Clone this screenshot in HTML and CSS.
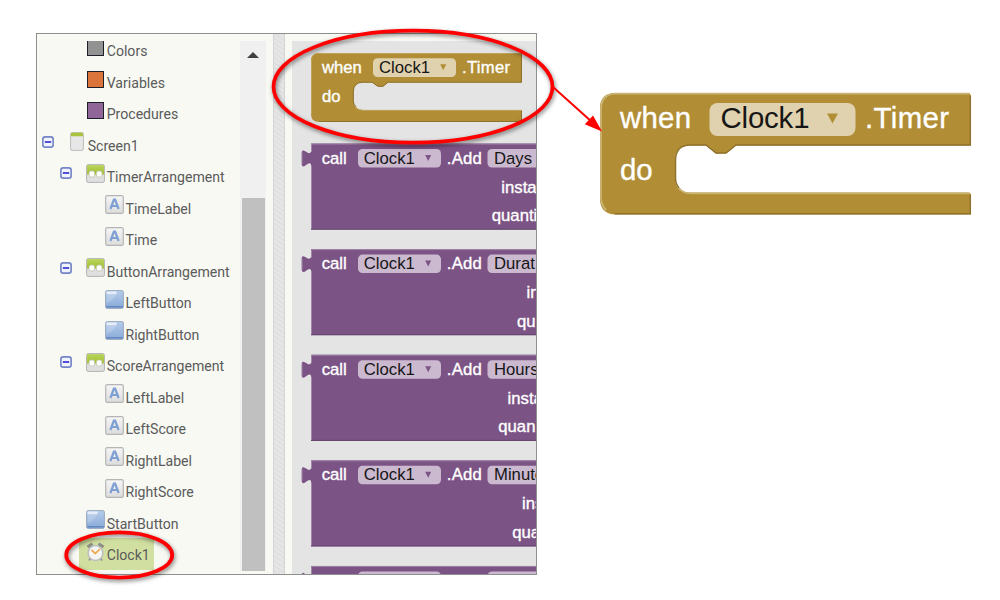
FILE: index.html
```html
<!DOCTYPE html>
<html lang="en">
<head>
<meta charset="utf-8">
<title>Clock1 Timer block</title>
<link rel="stylesheet" href="styles.css">
</head>
<body>
<svg class="defs" width="0" height="0" aria-hidden="true">
  <defs>
    <linearGradient id="g-green" x1="0" y1="0" x2="0" y2="1"><stop offset="0" stop-color="#b9d55c"/><stop offset="1" stop-color="#9fbe2d"/></linearGradient>
    <linearGradient id="g-grey" x1="0" y1="0" x2="0" y2="1"><stop offset="0" stop-color="#f6f6f6"/><stop offset="1" stop-color="#dcdcdc"/></linearGradient>
    <linearGradient id="g-blue" x1="0" y1="0" x2="0" y2="1"><stop offset="0" stop-color="#b5ccea"/><stop offset="1" stop-color="#88aad8"/></linearGradient>
    <symbol id="i-minus" viewBox="0 0 11 11"><rect x=".8" y=".8" width="9.4" height="9.4" rx="2.2" fill="#f1f3fc" stroke="#7484c6" stroke-width="1.5"/><path d="M2.6 5.5h5.8" stroke="#2d2dcf" stroke-width="1.5"/></symbol>
    <symbol id="i-screen" viewBox="0 0 14 19"><rect x=".6" y=".6" width="12.8" height="17.8" rx="1.6" fill="#e7e7e7" stroke="#bcbcbc"/><path d="M1 4.2V1.8Q1 .8 2 .8h10q1 0 1 1v2.4z" fill="#a9c43c"/></symbol>
    <symbol id="i-arr" viewBox="0 0 19 19"><rect x=".6" y=".6" width="17.8" height="17.8" rx="1.6" fill="#dfdfdf" stroke="#b3b3b3"/><path d="M1.1 10.500V1.100h16.800v9.400z" fill="url(#g-green)"/><rect x="3" y="7" width="5.600" height="6" rx="2" fill="#fff" stroke="#bfc6a8" stroke-width=".8"/><rect x="10.400" y="7" width="5.600" height="6" rx="2" fill="#fff" stroke="#bfc6a8" stroke-width=".8"/></symbol>
    <symbol id="i-label" viewBox="0 0 19 19"><rect x=".7" y=".7" width="17.600" height="17.600" rx="1.600" fill="url(#g-grey)" stroke="#b5b5b5" stroke-width="1.200"/><path d="M5.400 14 8.900 4.500h1.200L13.600 14M6.800 11h5.400" fill="none" stroke="#7d9fd3" stroke-width="2.200"/></symbol>
    <symbol id="i-button" viewBox="0 0 19 19"><rect x=".6" y=".6" width="17.800" height="17.800" rx="1.600" fill="url(#g-blue)" stroke="#9aa9bd"/><path d="M1.500 1.500h10v2.600h-10z" fill="#e0eaf7"/><path d="M1.500 13Q9 11.500 12.500 1.500H1.500z" fill="#fff" opacity=".18"/><path d="M1.200 16h16.600v1.500H1.200z" fill="#6287c1"/></symbol>
    <symbol id="i-clock" viewBox="0 0 19 21"><path d="M1.500 5 6.500 1.800M12.500 1.800l5 3.200" stroke="#8b8f86" stroke-width="3.200"/><path d="m4.500 16-1.500 2.500M14.500 16l1.500 2.500" stroke="#999" stroke-width="2"/><circle cx="9.500" cy="11" r="7.400" fill="#f5f5f3" stroke="#bcbdbd" stroke-width="1.500"/><path d="m5.500 8 3.800 3.500L14 7" fill="none" stroke="#f0a94a" stroke-width="1.700"/></symbol>
    <symbol id="s-call" viewBox="0 0 236 88" overflow="visible">
      <path d="M10 .5H240V86.500H10V21.500C8 17 2.500 27 .8 22V9C2.500 4 8 14 10 8.500z" fill="#7c5385"/>
      <path d="M10.500 86V22.500M10.500 9V1H240" fill="none" stroke="#a184a8"/>
      <path d="M10 86.200H240" stroke="#63406c"/>
      <path d="M1.200 21V9.500" stroke="#977a9e"/>
      <rect x="57" y="6" width="83" height="18.500" rx="4.500" fill="#cbb9cf"/>
      <rect x="186.500" y="6" width="70" height="18.500" rx="4.500" fill="#cbb9cf"/>
      <path d="M124.200 12h6l-3 6z" fill="#7c5385"/>
      <text x="20.700" y="20.600" class="lit">call</text><text x="62.800" y="20.600" class="dark">Clock1</text><text x="145.800" y="20.600" class="lit" textLength="35">.Add</text>
    </symbol>
  </defs>
</svg>
<main class="stage">
  <section class="frame">
    <div class="tree">
      <ul class="rows">
        <li class="row d1"><i class="swatch grey"></i><span>Colors</span></li>
        <li class="row d1"><i class="swatch orange"></i><span>Variables</span></li>
        <li class="row d1"><i class="swatch purple"></i><span>Procedures</span></li>
        <li class="row root"><svg class="minus"><use href="#i-minus"/></svg><svg class="screen"><use href="#i-screen"/></svg><span>Screen1</span></li>
        <li class="row branch"><svg class="minus"><use href="#i-minus"/></svg><svg class="icon"><use href="#i-arr"/></svg><span>TimerArrangement</span></li>
        <li class="row d2"><svg class="icon"><use href="#i-label"/></svg><span>TimeLabel</span></li>
        <li class="row d2"><svg class="icon"><use href="#i-label"/></svg><span>Time</span></li>
        <li class="row branch"><svg class="minus"><use href="#i-minus"/></svg><svg class="icon"><use href="#i-arr"/></svg><span>ButtonArrangement</span></li>
        <li class="row d2"><svg class="icon"><use href="#i-button"/></svg><span>LeftButton</span></li>
        <li class="row d2"><svg class="icon"><use href="#i-button"/></svg><span>RightButton</span></li>
        <li class="row branch"><svg class="minus"><use href="#i-minus"/></svg><svg class="icon"><use href="#i-arr"/></svg><span>ScoreArrangement</span></li>
        <li class="row d2"><svg class="icon"><use href="#i-label"/></svg><span>LeftLabel</span></li>
        <li class="row d2"><svg class="icon"><use href="#i-label"/></svg><span>LeftScore</span></li>
        <li class="row d2"><svg class="icon"><use href="#i-label"/></svg><span>RightLabel</span></li>
        <li class="row d2"><svg class="icon"><use href="#i-label"/></svg><span>RightScore</span></li>
        <li class="row d1"><svg class="icon"><use href="#i-button"/></svg><span>StartButton</span></li>
        <li class="row selected"><svg class="clock"><use href="#i-clock"/></svg><span>Clock1</span></li>
      </ul>
      <div class="scrollbar"><i class="up"></i><i class="thumb"></i></div>
    </div>
    <div class="gutter"></div>
    <div class="drawer">
      <svg class="blocks" viewBox="292 41 244 533">
        <path d="M319 53H522V82.500H388L383 86.500H378L372 82.500H363Q353.500 82.500 353.500 92V101Q353.500 110 363 110H522V122H319Q311 122 311 114V61Q311 53 319 53z" fill="#b18e35"/>
        <path d="M311.500 114V61Q311.500 53.500 319 53.500H521.500M356 107.500Q358.500 110.400 363 110.400H521.500" fill="none" stroke="#bfa358"/>
        <path d="M356 107Q353.300 104 353.300 101V92Q353.300 82.200 363 82.200H372L378 86.300H383L388 82.200H521.500V54M319 121.500H521.500V111" fill="none" stroke="#8d702a"/>
        <rect x="373" y="58.300" width="83" height="18.700" rx="4.500" fill="#e0d2ae"/>
        <path d="M440.200 64.200h6l-3 6z" fill="#b18e35"/>
        <text x="322" y="73" class="lit">when</text><text x="379" y="73" class="dark">Clock1</text><text x="462" y="73" class="lit" textLength="48">.Timer</text><text x="322" y="102.300" class="lit">do</text>
        <g transform="translate(301 143)"><use href="#s-call" width="236" height="88"/><text x="193" y="20.600" class="dark">Days</text><text x="200.300" y="49.600" class="lit">insta</text><text x="190.800" y="78.300" class="lit">quanti</text></g>
        <g transform="translate(301 248.600)"><use href="#s-call" width="236" height="88"/><text x="193" y="20.600" class="dark">Durat</text><text x="225.600" y="49.600" class="lit">in</text><text x="216" y="78.300" class="lit">qu</text></g>
        <g transform="translate(301 354.200)"><use href="#s-call" width="236" height="88"/><text x="193" y="20.600" class="dark">Hours</text><text x="206.600" y="49.600" class="lit">insta</text><text x="197.300" y="78.300" class="lit">quan</text></g>
        <g transform="translate(301 459.800)"><use href="#s-call" width="236" height="88"/><text x="193" y="20.600" class="dark">Minute</text><text x="221" y="49.600" class="lit">ins</text><text x="211.300" y="78.300" class="lit">qua</text></g>
        <g transform="translate(301 565.400)"><path d="M10 .5H240V20H10z" fill="#7c5385"/><path d="M10.500 10V1H240" fill="none" stroke="#a184a8"/><rect x="57" y="6" width="83" height="18" rx="4.500" fill="#cbb9cf"/><rect x="186.500" y="6" width="70" height="18" rx="4.500" fill="#cbb9cf"/><path d="M.5 10Q1 7 3 7.500L5 10z" fill="#7c5385"/></g>
      </svg>
    </div>
  </section>
  <svg class="overlay" viewBox="0 0 1000 600">
    <path d="M614 93H969L971 95V145.500H736L726 153.500H716L706 145.500H690Q675 145.500 675 160V178Q675 192.500 690 192.500H969L971 194V214.500H614Q600 213 600 199V108Q600 94 614 93z" fill="#b18e35"/>
    <path d="M601 199V108Q602 94.300 615 93.700H969.500M679 188Q683 193.300 690 193.300H969.500M601 199Q602 206 606 210" fill="none" stroke="#cab474" stroke-width="1.800"/>
    <path d="M679 188Q675.500 184 675.500 178V160Q676 145 690 145H706L716 153H726L736 145H970.300V96M615 213.800H970.300V195" fill="none" stroke="#8f722b" stroke-width="1.500"/>
    <rect x="709.500" y="103" width="146" height="33" rx="8" fill="#e0d2ae"/>
    <path d="M827 113.500h11l-5.500 10z" fill="#b18e35"/>
    <g class="big"><text x="620" y="128.300" class="lit" textLength="71">when</text><text x="720.500" y="128.300" class="dark" textLength="89">Clock1</text><text x="865" y="128.300" class="lit" textLength="84">.Timer</text><text x="620" y="179.600" class="lit">do</text></g>
    <g class="marks"><ellipse cx="413" cy="86.700" rx="139.500" ry="56"/><ellipse cx="119.200" cy="555" rx="53" ry="22.600"/></g>
    <path d="M553 87 592 122" stroke="#fe0000" stroke-width="2"/><path d="M602 131.500 584.800 124.300 593 115.500z" fill="#fe0000"/>
  </svg>
</main>
</body>
</html>
```
FILE: styles.css
```css
body { margin: 0; background: #fff; }
.defs { position: absolute; }
.stage { position: relative; box-sizing: border-box; width: 1000px; height: 600px; padding: 33px 0 0 36px; overflow: hidden; }
.frame { box-sizing: border-box; width: 501px; height: 542px; border: 1px solid #8f8f8f; display: flex; overflow: hidden; background: #f8f9f3; }
.tree { width: 236px; display: flex; box-sizing: border-box; padding-top: 7px; }
.rows { list-style: none; margin: 0; padding: 0; width: 203px; height: 533px; overflow: hidden; font: 14.100px/20px Roboto, sans-serif; color: #5b5b5b; }
.row { display: flex; align-items: flex-start; box-sizing: border-box; height: 31.500px; padding-top: 3.500px; }
.row:first-child { margin-top: -7px; }
.row span { padding-top: 3.700px; margin-left: -.300px; white-space: nowrap; }
.d1 { padding-left: 49px; }
.d2 { padding-left: 67.800px; }
.branch { padding-left: 23px; }
.root { padding-left: 5px; }
.icon { width: 19px; height: 19px; margin-right: 2px; flex: none; }
.minus { width: 12px; height: 12px; margin: 3.500px 14px 0 0; flex: none; }
.screen { width: 14px; height: 19px; margin: 0 4.500px 0 1px; flex: none; }
.root .minus { margin-right: 14.500px; }
.swatch { box-sizing: border-box; width: 17px; height: 17px; margin: 1.500px 3px 0 1px; border: 1.500px solid #1c2028; flex: none; }
.grey { background: #929292; }
.orange { background: #dc753b; }
.purple { background: #8f6697; }
.selected { width: 75px; margin-left: 42px; padding-left: 7px; background: #d1e0a1; }
.clock { width: 19px; height: 21px; margin: 0 2px 0 0; flex: none; }
.scrollbar { width: 26px; height: 530px; display: flex; flex-direction: column; align-items: center; background: #f0f0f0; }
.up { width: 0; height: 0; margin-top: 11px; border: 6px solid transparent; border-top: 0; border-bottom: 6.500px solid #404040; }
.thumb { width: 23px; height: 373px; margin-top: 139.500px; background: #c0c0c0; }
.gutter { box-sizing: border-box; width: 12px; border: 1px solid #d4d4d4; border-width: 0 1px; background: #e3e3e3 repeating-linear-gradient(35deg, #e6e6e6 0 2px, #e0e0e0 2px 4px); }
.drawer { width: 251px; box-sizing: border-box; padding: 7px 0 0 7px; }
.blocks { display: block; width: 244px; height: 533px; background: #e4e4e4; }
.blocks, .overlay { font-family: "Liberation Sans", Arial, sans-serif; font-size: 16.700px; }
.overlay { position: absolute; inset: 0; width: 1000px; height: 600px; }
.big { font-size: 29.400px; }
.lit { fill: #fff; stroke: #fff; stroke-width: .350px; }
.dark { fill: #161616; }
.marks { fill: none; stroke: #fe0000; stroke-width: 3.700px; filter: drop-shadow(1px 2px 2px rgba(0, 0, 0, .5)); }
```
